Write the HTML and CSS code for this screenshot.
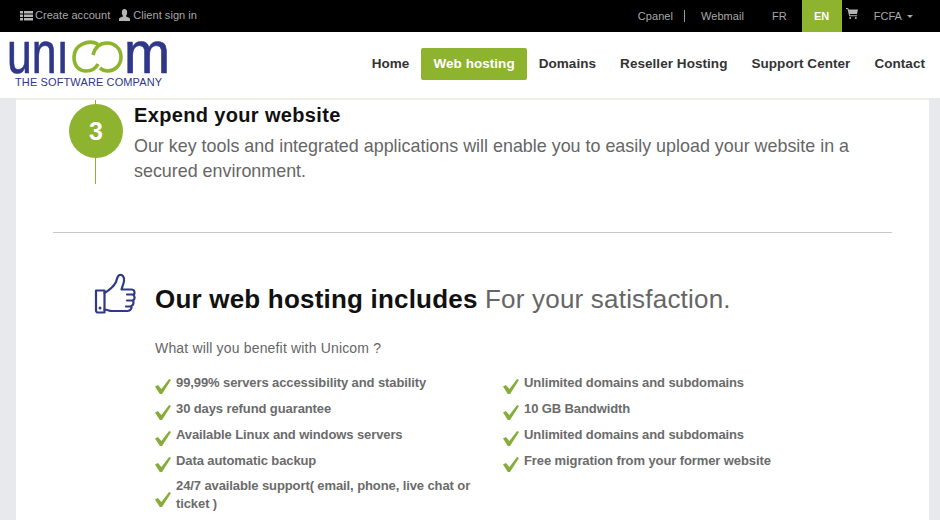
FILE: index.html
```html
<!DOCTYPE html>
<html lang="en">
<head>
<meta charset="utf-8">
<title>Unicom</title>
<link rel="stylesheet" href="styles.css">
</head>
<body>
<div class="topbar">
  <div class="top-left">
    <a class="top-link"><svg class="ti" width="13" height="11" viewBox="0 0 13 11"><path d="M0 1h3v2.500H0zM4 1h9v2.500H4zM0 4.500h3V7H0zM4 4.500h9V7H4zM0 8h3v2.500H0zM4 8h9v2.500H4z" fill="#b5b5b5"/></svg>Create account</a>
    <a class="top-link"><svg class="ti user" width="11" height="12" viewBox="0 0 11 12"><path d="M5.500 0C7.300 0 8.200 1.400 8.200 3.200 8.200 5 7.300 6.500 7 7.200c.3.800 3.500 1 4 2.600V12H0V9.800c.5-1.600 3.700-1.800 4-2.600C3.700 6.500 2.800 5 2.800 3.200 2.800 1.400 3.700 0 5.500 0z" fill="#b5b5b5"/></svg>Client sign in</a>
  </div>
  <div class="top-right">
    <a class="tr cpanel">Cpanel</a>
    <a class="tr webmail">Webmail</a>
    <a class="tr fr">FR</a>
    <a class="tr en">EN</a>
    <svg class="cart" width="12" height="11" viewBox="0 0 12 11"><path d="M0 0h2.200l.4 1.500H12l-1 4.500H3.700l.3 1.200h7v1H3.200L1.500 1H0z" fill="#b5b5b5"/><circle cx="4.200" cy="10" r="1" fill="#b5b5b5"/><circle cx="9.800" cy="10" r="1" fill="#b5b5b5"/></svg>
    <a class="tr fcfa">FCFA<span class="caret"></span></a>
  </div>
</div>
<header class="header">
  <div class="logo">
    <svg class="logo-mark" width="164" height="36" viewBox="0 0 164 36">
      <text x="-1" y="33" class="logo-word" textLength="62" lengthAdjust="spacingAndGlyphs">unı</text>
      <g fill="none" stroke="#8db42f" stroke-width="3.600" stroke-linecap="butt">
        <path d="M90 4C80-1 66 5 66 17 66 27 72 31 78 31 84 31 88 28 90 24"/>
        <path d="M85 15C87 7 92 3 99 3 108 3 113 10 113 17 113 26 106 31 100 31 97 31 94 30 92 28"/>
      </g>
      <text x="116" y="33" class="logo-word" textLength="46" lengthAdjust="spacingAndGlyphs">m</text>
    </svg>
    <div class="logo-tag">THE SOFTWARE COMPANY</div>
  </div>
  <nav class="nav">
    <a class="nav-item">Home</a>
    <a class="nav-item active">Web hosting</a>
    <a class="nav-item">Domains</a>
    <a class="nav-item">Reseller Hosting</a>
    <a class="nav-item">Support Center</a>
    <a class="nav-item">Contact</a>
  </nav>
</header>
<main class="card">
  <section class="step">
    <div class="step-rail"><span class="step-num">3</span></div>
    <div class="step-body">
      <h3>Expend your website</h3>
      <p>Our key tools and integrated applications will enable you to easily upload your website in a secured environment.</p>
    </div>
  </section>
  <hr class="rule">
  <section class="includes">
    <div class="inc-head">
      <svg class="thumb" width="44" height="44" viewBox="0 0 44 44"><g fill="none" stroke="#2f3a86" stroke-width="2.200" stroke-linejoin="round" stroke-linecap="round"><path d="M2 18.500h8.500v22H4a2 2 0 0 1-2-2z"/><path d="M10.500 21c5-3 9-6 11.500-11 1-2.500 1-6 3.500-7 3-.8 5 2 4.500 6-.3 3-2 6-2.500 8.500h10c3 0 4 3.500 2 5.500 1.500 1.500 1.500 4.500-.5 5.500 1 2 .5 4.500-1.500 5.500.5 2.500-1 5-4 5H18c-3 0-5-1.500-7.500-1.500"/><path d="M33 22.500h6M33 28.500h5.500M32 34.500h5"/></g><circle cx="6" cy="36" r="1.500" fill="#2f3a86"/></svg>
      <h2><b>Our web hosting includes</b> For your satisfaction.</h2>
    </div>
    <p class="lead">What will you benefit with Unicom ?</p>
    <div class="lists">
      <ul class="list">
        <li>99,99% servers accessibility and stability</li>
        <li>30 days refund guarantee</li>
        <li>Available Linux and windows servers</li>
        <li>Data automatic backup</li>
        <li class="tall">24/7 available support( email, phone, live chat or ticket )</li>
      </ul>
      <ul class="list right">
        <li>Unlimited domains and subdomains</li>
        <li>10 GB Bandwidth</li>
        <li>Unlimited domains and subdomains</li>
        <li>Free migration from your former website</li>
      </ul>
    </div>
  </section>
</main>
</body>
</html>
```
FILE: styles.css
```css
* { box-sizing: border-box; }
html, body { margin: 0; height: 520px; overflow: hidden; }
body { background: #e8e9ed; font-family: "Liberation Sans", Arial, sans-serif; color: #666; }
.topbar { height: 32px; background: #000; display: flex; justify-content: space-between; padding-left: 20px; font-size: 11px; letter-spacing: .05px; color: #a8a8a8; }
.top-left { display: flex; gap: 9px; align-items: center; padding-bottom: 2px; }
.top-link { display: flex; align-items: center; }
.ti { margin-right: 2px; }
.ti.user { margin-right: 3px; }
.top-right { display: flex; align-items: center; padding-right: 27px; }
.tr { display: block; }
.cpanel { padding-right: 11px; border-right: 1px solid #999; line-height: 12px; margin-right: 16px; }
.webmail { margin-right: 28px; }
.fr { margin-right: 15px; }
.en { align-self: stretch; width: 40px; background: #8db32f; color: #fff; font-weight: bold; text-align: center; line-height: 32px; }
.cart { margin: -5px 16px 0 4px; }
.caret { display: inline-block; margin-left: 5px; vertical-align: 2px; border-top: 3px solid #a8a8a8; border-left: 3px solid transparent; border-right: 3px solid transparent; }
.header { height: 66px; background: #fff; display: flex; justify-content: space-between; padding: 8px 3px 0 8px; }
.logo { width: 164px; }
.logo-mark { display: block; }
.logo-word { font-family: "Liberation Sans", Arial, sans-serif; font-size: 60px; fill: #2e3788; stroke: #2e3788; stroke-width: .7px; }
.logo-tag { font-size: 11px; letter-spacing: .12px; color: #2e3788; margin-left: 7px; white-space: nowrap; line-height: 12px; }
.nav { display: flex; height: 32px; margin-top: 8px; }
.nav-item { font-size: 13.500px; letter-spacing: .05px; font-weight: bold; color: #333; padding: 0 12px; line-height: 31px; border-radius: 2px; }
.nav-item.active { background: #8db32f; color: #fff; }
.card { margin: 0 11px 0 16px; background: #fff; border-top: 2px solid #eef0e2; height: 422px; padding: 0 37px; overflow: hidden; }
.step { display: flex; height: 132px; padding-left: 16px; }
.step-rail { width: 54px; height: 84px; position: relative; display: flex; align-items: flex-start; justify-content: center; margin-right: 11px; padding-top: 4px; }
.step-rail::before { content: ""; position: absolute; left: 26px; top: 0; bottom: 0; width: 1px; background: #8db32f; }
.step-num { position: relative; width: 54px; height: 54px; border-radius: 50%; background: #8db32f; color: #fff; font-size: 25px; font-weight: bold; text-align: center; line-height: 54px; }
.step-body { flex: 1; }
.step-body h3 { margin: 3px 0 0; font-size: 20px; line-height: 24px; letter-spacing: .35px; color: #111; }
.step-body p { margin: 7px 0 0; font-size: 17.900px; line-height: 25px; color: #666; }
.rule { margin: 0; border: 0; border-top: 1px solid #c8c8c8; }
.includes { padding-left: 40px; }
.inc-head { display: flex; align-items: flex-start; margin-top: 39px; height: 44px; }
.thumb { margin-left: 1px; margin-right: 17px; }
.inc-head h2 { margin: 12px 0 0; font-size: 26px; line-height: 30px; font-weight: normal; color: #666; white-space: nowrap; letter-spacing: .2px; }
.inc-head h2 b { color: #111; }
.lead { margin: 22px 0 0 62px; font-size: 14px; line-height: 20px; letter-spacing: .17px; color: #666; }
.lists { display: flex; margin: 14px 0 0 62px; }
.list { list-style: none; margin: 0; padding: 0; width: 348px; }
.list.right { width: 300px; }
.list li { position: relative; padding-left: 21px; font-size: 13px; letter-spacing: -.1px; font-weight: bold; line-height: 20px; margin-bottom: 6px; color: #6b6b6b; }
.list li:first-child { margin-top: 1px; }
.list li::before { content: ""; position: absolute; left: 0; top: 6px; width: 16px; height: 15px; background: #86ad3a; clip-path: polygon(0 50%, 18% 40%, 40% 66%, 88% 0, 100% 6%, 44% 100%, 30% 100%); }
.list li.tall { margin-top: 1px; padding-right: 30px; line-height: 18px; }
.list li.tall::before { top: 15px; }
```
